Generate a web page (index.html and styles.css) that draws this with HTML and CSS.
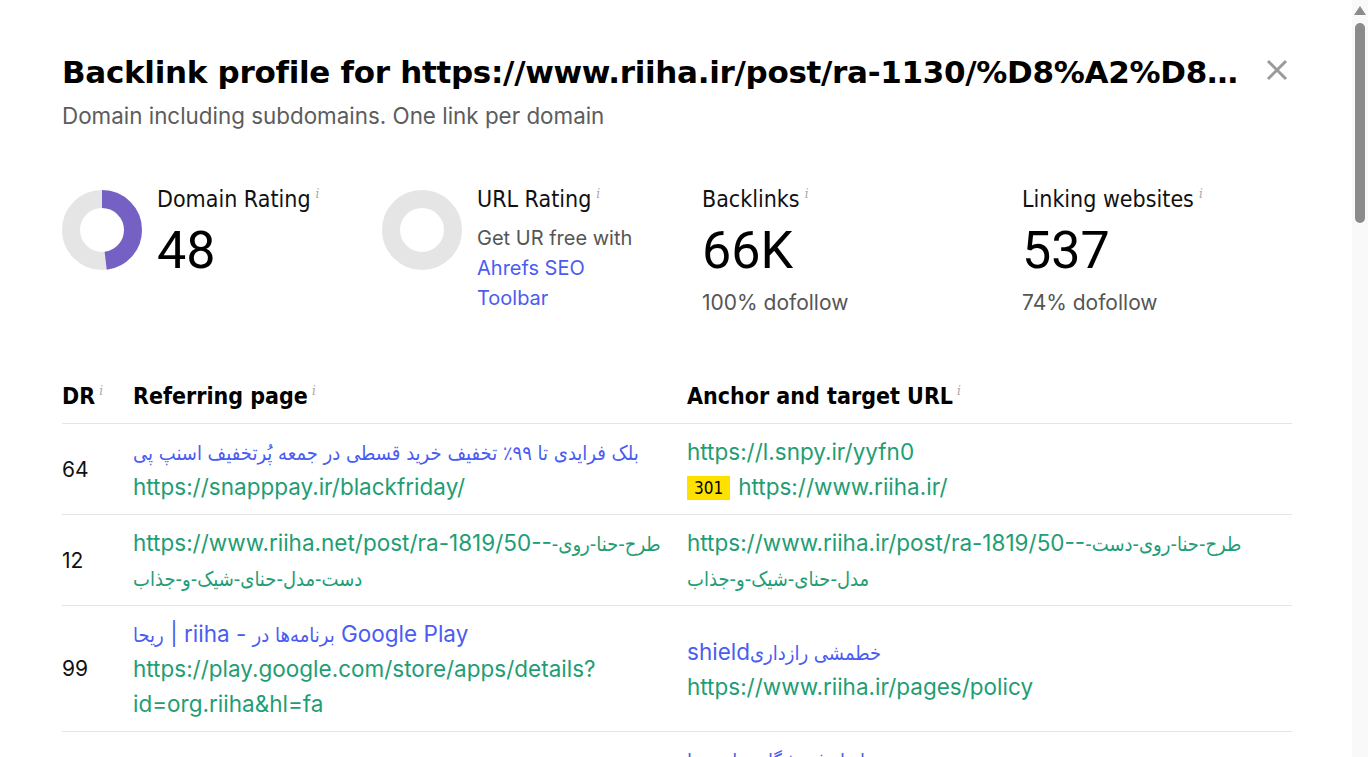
FILE: index.html
```html
<!DOCTYPE html>
<html lang="en">
<head>
    <meta charset="UTF-8">
    <meta name="viewport" content="width=device-width, initial-scale=1.0">
    <title>Backlink profile</title>
    <link rel="stylesheet" href="styles.css">
</head>
<body>
    <div class="page">
        <div class="modal">
            <div class="modal-head">
                <h1 class="title">Backlink profile for https://www.riiha.ir/post/ra-1130/%D8%A2%D8%B4%D9%BE%D8%B2%DB%8C</h1>
                <button class="close" aria-label="Close">
                    <svg width="22" height="22" viewBox="0 0 22 22">
                        <path d="M2 2 L20 20 M20 2 L2 20" stroke="#9a9a9a" stroke-width="3" fill="none"/>
                    </svg>
                </button>
            </div>
            <p class="subtitle">Domain including subdomains. One link per domain</p>

            <div class="metrics">
                <div class="metric">
                    <svg class="donut" width="80" height="80" viewBox="0 0 80 80">
                        <circle cx="40" cy="40" r="31" fill="none" stroke="#e5e5e5" stroke-width="18"/>
                        <!-- 48% of the ring, starting at 12 o'clock -->
                        <circle cx="40" cy="40" r="31" fill="none" stroke="#7561c4" stroke-width="18"
                                stroke-dasharray="93.5 101.3" transform="rotate(-90 40 40)"/>
                    </svg>
                    <div class="metric-body">
                        <div class="metric-label">Domain Rating<span class="info">i</span></div>
                        <div class="metric-value">48</div>
                    </div>
                </div>

                <div class="metric">
                    <svg class="donut" width="80" height="80" viewBox="0 0 80 80">
                        <circle cx="40" cy="40" r="31" fill="none" stroke="#e5e5e5" stroke-width="18"/>
                    </svg>
                    <div class="metric-body">
                        <div class="metric-label">URL Rating<span class="info">i</span></div>
                        <div class="metric-note">Get UR free with<br><a href="#" class="blue">Ahrefs SEO<br>Toolbar</a></div>
                    </div>
                </div>

                <div class="metric">
                    <div class="metric-body">
                        <div class="metric-label">Backlinks<span class="info">i</span></div>
                        <div class="metric-value">66K</div>
                        <div class="metric-sub">100% dofollow</div>
                    </div>
                </div>

                <div class="metric">
                    <div class="metric-body">
                        <div class="metric-label">Linking websites<span class="info">i</span></div>
                        <div class="metric-value">537</div>
                        <div class="metric-sub">74% dofollow</div>
                    </div>
                </div>
            </div>

            <table class="links">
                <thead>
                    <tr>
                        <th class="col-dr">DR<span class="info">i</span></th>
                        <th class="col-ref">Referring page<span class="info">i</span></th>
                        <th>Anchor and target URL<span class="info">i</span></th>
                    </tr>
                </thead>
                <tbody>
                    <tr>
                        <td class="dr">64</td>
                        <td>
                            <a href="#" class="blue line"><span class="fa">بلک فرایدی تا ۹۹٪ تخفیف خرید قسطی در جمعه پُرتخفیف اسنپ پی</span></a>
                            <a href="#" class="green line">https://snapppay.ir/blackfriday/</a>
                        </td>
                        <td>
                            <a href="#" class="green line">https://l.snpy.ir/yyfn0</a>
                            <div class="line"><span class="redirect">301</span><a href="#" class="green">https://www.riiha.ir/</a></div>
                        </td>
                    </tr>
                    <tr>
                        <td class="dr">12</td>
                        <td>
                            <a href="#" class="green line">https://www.riiha.net/post/ra-1819/50--<span class="fa">طرح-حنا-روی-دست-مدل-حنای-شیک-و-جذاب</span></a>
                        </td>
                        <td>
                            <a href="#" class="green line">https://www.riiha.ir/post/ra-1819/50--<span class="fa">طرح-حنا-روی-دست-مدل-حنای-شیک-و-جذاب</span></a>
                        </td>
                    </tr>
                    <tr>
                        <td class="dr">99</td>
                        <td>
                            <a href="#" class="blue line"><span class="fa">ریحا</span> | riiha - <span class="fa">برنامه‌ها در</span> Google Play</a>
                            <a href="#" class="green line">https://play.google.com/store/apps/details?<wbr>id=org.riiha&amp;hl=fa</a>
                        </td>
                        <td>
                            <a href="#" class="blue line">shield<span class="fa">خطمشی رازداری</span></a>
                            <a href="#" class="green line">https://www.riiha.ir/pages/policy</a>
                        </td>
                    </tr>
                    <tr>
                        <td class="dr">35</td>
                        <td>
                            <a href="#" class="green line">https://www.riiha.ir/blog</a>
                        </td>
                        <td>
                            <a href="#" class="blue line"><span class="fa">ابزار فروشگاه ساز ریحا</span></a>
                            <a href="#" class="green line">https://www.riiha.ir/</a>
                        </td>
                    </tr>
                </tbody>
            </table>
        </div>

        <div class="scrollbar">
            <span class="scroll-arrow"></span>
            <span class="scroll-thumb"></span>
        </div>
    </div>
</body>
</html>
```

FILE: styles.css
```css
* {
    margin: 0;
    padding: 0;
    box-sizing: border-box;
}

body {
    font-family: Inter, "DejaVu Sans", sans-serif;
    color: #111;
    background: #fff;
    overflow: hidden;
}

a {
    text-decoration: none;
}

.page {
    display: flex;
    height: 100vh;
}

.modal {
    flex: 1;
    min-width: 0;
    padding: 54px 60px 0 62px;
    overflow: hidden;
}

/* header */
.modal-head {
    display: flex;
    align-items: flex-start;
    gap: 26px;
}

.title {
    flex: 1;
    min-width: 0;
    font-family: "DejaVu Sans", sans-serif;
    font-size: 31px;
    font-weight: 700;
    letter-spacing: -0.3px;
    line-height: 36px;
    color: #000;
    white-space: nowrap;
    overflow: hidden;
    text-overflow: ellipsis;
}

.close {
    border: none;
    background: none;
    margin: 5px 4px 0 0;
    width: 22px;
    height: 22px;
    cursor: pointer;
}

.close svg {
    display: block;
}

.subtitle {
    margin-top: 12px;
    font-size: 22.4px;
    line-height: 28px;
    color: #5c5c5c;
}

/* metric cards */
.metrics {
    display: grid;
    grid-template-columns: repeat(4, 320px);
    margin-top: 51px;
}

.metric {
    display: flex;
    gap: 15px;
}

.donut {
    flex: none;
    margin-top: 9px;
}

.metric-label {
    font-family: "DejaVu Sans Condensed", "DejaVu Sans", sans-serif;
    font-stretch: condensed;
    font-size: 23px;
    line-height: 26px;
    color: #111;
}

.info {
    font-family: "DejaVu Serif", serif;
    font-style: italic;
    font-weight: 400;
    font-stretch: normal;
    font-size: 12px;
    color: #a8a8a8;
    vertical-align: 9px;
    margin-left: 5px;
}

.metric-value {
    margin-top: 9px;
    font-family: Roboto, sans-serif;
    font-size: 52px;
    line-height: 60px;
    color: #000;
}

.metric-sub {
    margin-top: 7px;
    font-size: 21px;
    line-height: 30px;
    color: #555;
}

.metric-note {
    margin-top: 11px;
    font-size: 20px;
    line-height: 30px;
    color: #555;
}

.blue {
    color: #4a5cf2;
}

.green {
    color: #1f9d74;
}

/* persian runs inside titles and urls */
.fa {
    font-family: "DejaVu Sans Condensed", "DejaVu Sans", sans-serif;
    font-stretch: condensed;
    font-size: 20px;
    line-height: 20px;
}

/* backlinks table */
.links {
    width: 100%;
    margin-top: 46px;
    border-collapse: collapse;
}

.links th {
    text-align: left;
    font-family: "DejaVu Sans Condensed", "DejaVu Sans", sans-serif;
    font-stretch: condensed;
    font-size: 23px;
    font-weight: 700;
    line-height: 30px;
    padding: 12px 0;
    color: #000;
    border-bottom: 1px solid #e5e5e5;
    white-space: nowrap;
}

.links th .info {
    margin-left: 4px;
}

.col-dr {
    width: 71px;
}

.col-ref {
    width: 554px;
}

.links td {
    vertical-align: middle;
    padding: 10px 16px 10px 0;
    font-size: 22.5px;
    line-height: 35px;
    border-bottom: 1px solid #e5e5e5;
}

.links td.dr {
    font-size: 21px;
    color: #111;
}

.line {
    display: block;
}

.redirect {
    display: inline-block;
    background: #ffe100;
    color: #000;
    font-family: "DejaVu Sans Condensed", "DejaVu Sans", sans-serif;
    font-stretch: condensed;
    font-size: 17px;
    line-height: 24px;
    padding: 0 7px;
    margin-right: 8px;
    vertical-align: 1px;
}

/* scrollbar */
.scrollbar {
    flex: none;
    width: 16px;
    background: #f9f9f9;
    display: flex;
    flex-direction: column;
    align-items: center;
    padding-top: 6px;
}

.scroll-arrow {
    width: 0;
    height: 0;
    border-left: 6px solid transparent;
    border-right: 6px solid transparent;
    border-bottom: 9px solid #8b8b8b;
}

.scroll-thumb {
    width: 10px;
    height: 200px;
    margin-top: 8px;
    border-radius: 5px;
    background: #8b8b8b;
}
```
